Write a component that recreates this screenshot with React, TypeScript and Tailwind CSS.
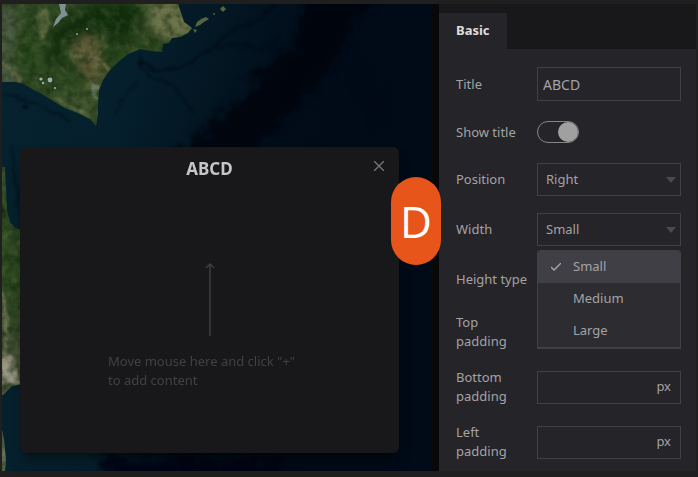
import { useState } from "react";
import type { ReactNode } from "react";

const SIZES = ["Small", "Medium", "Large"];

function SatelliteMap() {
  return (
    <svg
      className="absolute inset-0 h-full w-full"
      viewBox="2 4 430 467"
      preserveAspectRatio="xMinYMin slice"
      aria-hidden="true"
    >
      <defs>
        <linearGradient id="sea" gradientUnits="userSpaceOnUse" x1="2" y1="100" x2="380" y2="210">
          <stop offset="0" stopColor="#06222e" />
          <stop offset="0.3" stopColor="#051f2c" />
          <stop offset="0.5" stopColor="#031622" />
          <stop offset="0.7" stopColor="#010c19" />
          <stop offset="1" stopColor="#010a17" />
        </linearGradient>
        <linearGradient id="strip" x1="0" y1="0" x2="0" y2="1">
          <stop offset="0" stopColor="#30482a" />
          <stop offset="0.5" stopColor="#2c4a1f" />
          <stop offset="0.75" stopColor="#3a4a2c" />
          <stop offset="1" stopColor="#5a5d48" />
        </linearGradient>
        <filter id="soft" x="-50%" y="-50%" width="200%" height="200%" colorInterpolationFilters="sRGB">
          <feGaussianBlur stdDeviation="5" />
        </filter>
        <filter id="rough" x="-20%" y="-20%" width="140%" height="140%" colorInterpolationFilters="sRGB">
          <feTurbulence type="fractalNoise" baseFrequency="0.06" numOctaves="4" seed="4" result="n" />
          <feGaussianBlur in="SourceGraphic" stdDeviation="4" result="b" />
          <feDisplacementMap in="b" in2="n" scale="34" xChannelSelector="R" yChannelSelector="G" />
        </filter>
        <filter id="fine" x="-20%" y="-20%" width="140%" height="140%" colorInterpolationFilters="sRGB">
          <feTurbulence type="fractalNoise" baseFrequency="0.09" numOctaves="3" seed="4" result="n" />
          <feDisplacementMap in="SourceGraphic" in2="n" scale="8" xChannelSelector="R" yChannelSelector="G" />
          <feGaussianBlur stdDeviation="1" />
        </filter>
        <filter id="relief" x="0" y="0" width="100%" height="100%" colorInterpolationFilters="sRGB">
          <feTurbulence type="fractalNoise" baseFrequency="0.11" numOctaves="4" seed="8" />
          <feColorMatrix values="0 0 0 0 0.06  0 0 0 0 0.14  0 0 0 0 0.04  2.4 0 0 0 -0.9" />
          <feGaussianBlur stdDeviation="0.6" />
        </filter>
        <filter id="bright" x="0" y="0" width="100%" height="100%" colorInterpolationFilters="sRGB">
          <feTurbulence type="fractalNoise" baseFrequency="0.1" numOctaves="4" seed="21" />
          <feColorMatrix values="0 0 0 0 0.45  0 0 0 0 0.5  0 0 0 0 0.32  0 2 0 0 -0.9" />
          <feGaussianBlur stdDeviation="0.6" />
        </filter>
        <clipPath id="coast">
          <path d="M2 4H178L181 13L184 22L192 28L188 33L180 37L172 38L169 43L163 44L162 52L150 51L140 49L128 54L118 62L110 70L103 80L99 90L98 103L98 114L96 126L90 119L78 113L65 108L53 101L42 94L34 90L24 84L16 82L2 82Z" />
          <path d="M2 167L5 167L6 190L7 210L10 222L15 228L22 230V384L12 386L8 390L2 396Z" />
          <path d="M2 430L4 440L6 460L5 471H2Z" />
        </clipPath>
      </defs>

      <rect x="2" y="4" width="430" height="467" fill="url(#sea)" />
      <path d="M2 380V471H110L90 440L60 400Z" fill="#06212d" filter="url(#soft)" />

      <g filter="url(#rough)">
        <path d="M312 -10H372L350 30L330 70L290 112L255 150L230 180H150L185 145L220 115L262 75L295 40Z" fill="#00030c" opacity="0.85" />
        <path d="M100 460H280V500H95Z" fill="#010313" opacity="0.8" />
        <path d="M350 62L372 118L382 110L362 62Z" fill="#010713" opacity="0.5" />
      </g>
      <g filter="url(#fine)" fill="none" stroke="#010b14">
        <path d="M275 4L255 22L235 28L212 48L190 62L175 70L152 69L141 60" strokeWidth="3" opacity="0.65" />
        <path d="M140 55L142 68L155 80L172 84L184 98L192 112" strokeWidth="2" opacity="0.6" />
        <path d="M216 48L240 44L262 50L280 38" strokeWidth="4" opacity="0.4" />
        <path d="M2 95L35 103L55 113L70 122" strokeWidth="2" opacity="0.5" />
        <path d="M13 146L14 170L20 215" strokeWidth="3" opacity="0.4" />
        <path d="M115 115L125 95L138 82" strokeWidth="3" opacity="0.3" />
      </g>
      <ellipse cx="25" cy="107" rx="3" ry="2" fill="#02131d" />

      <g clipPath="url(#coast)">
        <rect x="2" y="4" width="200" height="125" fill="#2d4721" />
        <rect x="2" y="160" width="22" height="235" fill="url(#strip)" />
        <rect x="2" y="425" width="6" height="46" fill="#65705a" />
        <g filter="url(#soft)">
          <path d="M52 30L65 22L95 4H142L138 30L120 42L98 28L68 40L64 66L48 62Z" fill="#12300d" />
          <path d="M150 -4H190L196 35L165 40L148 28Z" fill="#6c734a" />
          <path d="M68 42L92 32L106 62L110 70L92 90L80 66Z" fill="#5e5937" />
          <path d="M-4 4L17 4L18 30L10 55L20 84L-4 90Z" fill="#4b5a43" />
          <path d="M18 25L38 45L36 66L22 66Z" fill="#29491c" />
          <path d="M52 92L95 88L98 125L60 108Z" fill="#40552e" />
          <path d="M100 40L130 44L120 62L102 74Z" fill="#26431b" />
        </g>
        <g filter="url(#fine)">
          <path d="M40 6L47 10L49 30L46 40L40 42L38 24Z" fill="#777b50" opacity="0.6" />
          <path d="M72 57L96 56L102 62L112 71" stroke="#857b55" strokeWidth="1.6" fill="none" />
          <path d="M102 32L104 46L98 56L96 68" stroke="#68714a" strokeWidth="1.4" fill="none" />
          <path d="M92 82L100 86L99 100L92 97Z" fill="#75856a" opacity="0.8" />
          <path d="M54 98L70 107L84 113" stroke="#74805c" strokeWidth="3" fill="none" opacity="0.7" />
          <path d="M2 62L12 74L22 82" stroke="#75704f" strokeWidth="4" fill="none" opacity="0.7" />
          <path d="M120 62L132 52L142 50" stroke="#6b7a53" strokeWidth="2" fill="none" opacity="0.6" />
          <path d="M168 42L178 38L176 46Z" fill="#0b210b" />
          <path d="M2 352L12 356L20 383H2Z" fill="#9c9887" />
          <path d="M2 292L6 325L5 362" stroke="#8b866f" strokeWidth="4" fill="none" opacity="0.7" />
          <path d="M2 208L6 208V217H2Z" fill="#0d1f0a" />
        </g>
        <rect x="2" y="4" width="200" height="467" filter="url(#relief)" opacity="0.5" />
        <rect x="2" y="4" width="200" height="467" filter="url(#bright)" opacity="0.4" />
      </g>

      <path d="M59 4H66L65 10L68 15L62 18L58 23L53 27L56 19L61 13Z" fill="#7f9094" />
      <g fill="#9fb0a8">
        <circle cx="41" cy="79" r="1.6" />
        <circle cx="50" cy="80" r="2.4" />
        <circle cx="43" cy="83" r="1.2" />
        <circle cx="55" cy="88" r="1.1" />
        <circle cx="77" cy="34" r="0.9" />
        <circle cx="87" cy="29" r="0.9" />
      </g>
      <g fill="#56653f">
        <path d="M195 27L197 22L201 19L206 17L209 19L204 22L200 25Z" />
        <path d="M220 9L223 6L226 9L223 12Z" />
        <path d="M212 14L215 13L215 15Z" />
        <path d="M193 29L197 30L195 33Z" />
      </g>
    </svg>
  );
}

function Popup({ title }: { title: string }) {
  return (
    <section className="relative flex-1 rounded-md bg-[#18181a] shadow-lg shadow-black/40">
      <header className="relative pt-[10px] text-center">
        <h2 className="text-[17px] leading-6 font-bold text-[#c6c6c7]">{title}</h2>
        <button
          type="button"
          aria-label="Close"
          className="absolute top-[11px] right-3 flex h-4 w-4 items-center justify-center text-[#77777a]"
        >
          <svg viewBox="0 0 10 10" className="h-[10px] w-[10px]" fill="none" stroke="currentColor" strokeWidth="1.3">
            <path d="M0 0L10 10M10 0L0 10" />
          </svg>
        </button>
      </header>
      <div className="mx-auto flex w-[203px] flex-col items-center pt-[82px]">
        <svg viewBox="0 0 10 73" className="h-[73px] w-[10px]" fill="none" stroke="#3d3d3f" strokeWidth="1.5">
          <path d="M5 73V1M1 5L5 1L9 5" />
        </svg>
        <p className="w-full pt-4 text-[13px] leading-[19px] text-[#414143]">
          Move mouse here and click "+"
          <br />
          to add content
        </p>
      </div>
    </section>
  );
}

function Row({ id, label, className, children }: { id: string; label: ReactNode; className: string; children: ReactNode }) {
  return (
    <div className={`flex items-center ${className}`}>
      <label htmlFor={id} className="w-[81px] shrink-0 leading-[19px]">
        {label}
      </label>
      <div className="relative min-w-0 flex-1">{children}</div>
    </div>
  );
}

function Select({ id, value, options, onChange }: { id: string; value: string; options: string[]; onChange: (v: string) => void }) {
  return (
    <div className="relative">
      <select
        id={id}
        value={value}
        onChange={(e) => onChange(e.target.value)}
        className="block h-[33px] w-full appearance-none border border-[#414144] bg-[#252429] px-2 outline-none"
      >
        {options.map((o) => (
          <option key={o}>{o}</option>
        ))}
      </select>
      <svg viewBox="0 0 10 6" className="pointer-events-none absolute top-[14px] right-[5px] h-[6px] w-[10px]" fill="#4b4b4e">
        <path d="M0 0H10L5 6Z" />
      </svg>
    </div>
  );
}

function PixelInput({ id }: { id: string }) {
  return (
    <div className="flex h-[33px] items-center border border-[#414144] pr-[9px]">
      <input id={id} inputMode="numeric" className="h-full min-w-0 flex-1 bg-transparent px-2 outline-none" />
      <span>px</span>
    </div>
  );
}

export default function App() {
  const [title, setTitle] = useState("ABCD");
  const [shown, setShown] = useState(true);
  const [position, setPosition] = useState("Right");
  const [width, setWidth] = useState("Small");
  const [heightType, setHeightType] = useState("Auto");

  return (
    <div className="flex min-h-screen bg-[#1f1f20] pt-1 pr-[2px] pb-[6px] pl-[2px] font-['Noto_Sans',sans-serif] text-[13px] text-[#a3a3a5]">
      <main className="relative flex min-w-0 flex-1 pt-[143px] pr-[33px] pb-[18px] pl-[18px]">
        <SatelliteMap />
        <Popup title={title} />
        <span className="absolute top-[173px] -right-[9px] z-10 flex h-[88px] w-[50px] items-center justify-center rounded-full bg-[#e8551a] font-['Open_Sans',sans-serif] text-[44px] leading-none text-white">
          D
        </span>
      </main>

      <aside className="w-[264px] shrink-0 border-l-[7px] border-[#080809] bg-[#252429]">
        <div role="tablist" className="flex bg-[#18181a] pt-[9px]">
          <button
            type="button"
            role="tab"
            aria-selected="true"
            className="h-9 bg-[#252429] px-[17px] font-bold text-[#dededf]"
          >
            Basic
          </button>
        </div>

        <form className="flex flex-col gap-[17px] pt-[18px] pr-[15px] pb-[10px] pl-[17px]">
          <Row id="title" label="Title" className="h-[34px]">
            <input
              id="title"
              value={title}
              onChange={(e) => setTitle(e.target.value)}
              className="block h-[34px] w-full border border-[#414144] bg-transparent px-[5px] text-[14px] outline-none"
            />
          </Row>
          <Row id="show" label="Show title" className="h-7">
            <input
              id="show"
              type="checkbox"
              role="switch"
              checked={shown}
              onChange={(e) => setShown(e.target.checked)}
              className="block h-[22px] w-[42px] appearance-none rounded-full border border-[#858587] before:block before:h-5 before:w-5 before:rounded-full before:bg-[#a0a0a1] checked:before:ml-5"
            />
          </Row>
          <Row id="position" label="Position" className="h-[33px]">
            <Select id="position" value={position} options={["Left", "Right"]} onChange={setPosition} />
          </Row>
          <Row id="width" label="Width" className="h-[33px]">
            <Select id="width" value={width} options={SIZES} onChange={setWidth} />
            <div
              role="listbox"
              aria-label="Width"
              className="absolute top-full left-0 z-10 mt-1 w-full overflow-hidden rounded-t-sm border border-b-2 border-[#414144] bg-[#2d2c31]"
            >
              {SIZES.map((size) => (
                <button
                  key={size}
                  type="button"
                  role="option"
                  aria-selected={size === width}
                  onClick={() => setWidth(size)}
                  className="flex h-8 w-full items-center gap-3 pl-[13px] text-left aria-selected:bg-[#403f46]"
                >
                  <svg viewBox="0 0 10 8" className="h-2 w-[10px]" fill="none" stroke="currentColor" strokeWidth="1.4">
                    {size === width && <path d="M0 4L3 7L10 0" />}
                  </svg>
                  {size}
                </button>
              ))}
            </div>
          </Row>
          <Row id="height-type" label="Height type" className="h-[33px]">
            <Select id="height-type" value={heightType} options={["Auto", "Fixed"]} onChange={setHeightType} />
          </Row>
          {["Top", "Bottom", "Left"].map((side) => (
            <Row
              key={side}
              id={side}
              label={
                <>
                  {side}
                  <br />
                  padding
                </>
              }
              className="h-[38px]"
            >
              <PixelInput id={side} />
            </Row>
          ))}
        </form>
      </aside>
    </div>
  );
}
